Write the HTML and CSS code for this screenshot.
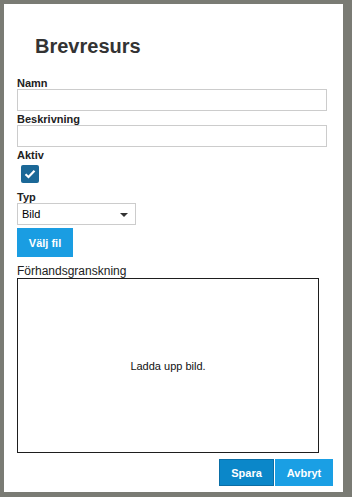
FILE: index.html
```html
<!DOCTYPE html>
<html lang="sv">
<head>
    <meta charset="UTF-8">
    <meta name="viewport" content="width=device-width, initial-scale=1.0">
    <title>Brevresurs</title>
    <link rel="stylesheet" href="styles.css">
</head>
<body>
    <div class="dialog">
        <h2 class="dialog-title">Brevresurs</h2>

        <label class="field-label" for="namn">Namn</label>
        <input type="text" id="namn" class="text-input">

        <label class="field-label" for="beskrivning">Beskrivning</label>
        <input type="text" id="beskrivning" class="text-input">

        <span class="field-label">Aktiv</span>
        <div class="checkbox">
            <svg width="12" height="10" viewBox="0 0 12 10">
                <path d="M1.5 5.2 L4.5 8 L10.5 1.8" fill="none" stroke="#fff" stroke-width="2.2"/>
            </svg>
        </div>

        <label class="field-label" for="typ">Typ</label>
        <div class="select-wrap">
            <select id="typ" class="select">
                <option>Bild</option>
            </select>
            <svg class="select-arrow" width="8" height="4" viewBox="0 0 8 4">
                <path d="M0 0 L8 0 L4 4 Z" fill="#333"/>
            </svg>
        </div>

        <button class="btn btn-file">Välj fil</button>

        <span class="field-label preview-label">Förhandsgranskning</span>
        <div class="preview">Ladda upp bild.</div>

        <div class="dialog-footer">
            <button class="btn btn-save">Spara</button>
            <button class="btn btn-cancel">Avbryt</button>
        </div>
    </div>
</body>
</html>
```

FILE: styles.css
```css
body {
    margin: 0;
    background-color: #7a7b74;
    font-family: "Liberation Sans", Arial, sans-serif;
    font-size: 11px;
    color: #222;
}
.dialog {
    display: flex;
    flex-direction: column;
    box-sizing: border-box;
    width: 339px;
    height: 488px;
    margin: 4px;
    padding: 31px 16px 0 13px;
    background-color: #fff;
}
.dialog-title {
    margin: 0 0 20px 18px;
    font-size: 20px;
    line-height: 22px;
    font-weight: bold;
    color: #333;
}
.field-label {
    display: block;
    font-weight: bold;
    line-height: 12px;
    color: #222;
}
.text-input {
    box-sizing: border-box;
    width: 310px;
    height: 22px;
    margin: 0 0 2px 0;
    border: 1px solid #ccc;
    padding: 0 4px;
    font-family: inherit;
    font-size: 11px;
}
.checkbox {
    display: flex;
    align-items: center;
    justify-content: center;
    width: 18px;
    height: 18px;
    margin: 4px 0 8px 4px;
    border-radius: 2px;
    background-color: #1b6897;
}
.select-wrap {
    position: relative;
    width: 119px;
}
.select {
    box-sizing: border-box;
    width: 119px;
    height: 22px;
    border: 1px solid #ccc;
    border-radius: 0;
    padding: 0 0 0 4px;
    background-color: #fff;
    font-family: inherit;
    font-size: 11px;
    color: #000;
    appearance: none;
    -webkit-appearance: none;
}
.select-arrow {
    position: absolute;
    right: 8px;
    top: 10px;
}
.btn {
    box-sizing: border-box;
    border: 1px solid transparent;
    font-family: inherit;
    font-size: 11px;
    font-weight: bold;
    color: #fff;
    cursor: pointer;
}
.btn-file {
    align-self: flex-start;
    width: 56px;
    height: 29px;
    margin-top: 3px;
    padding: 0;
    background-color: #1a9de2;
    border-color: #1a9de2;
}
.preview-label {
    margin-top: 8px;
    font-size: 12px;
    font-weight: normal;
}
.preview {
    display: flex;
    align-items: center;
    justify-content: center;
    box-sizing: border-box;
    width: 302px;
    height: 175px;
    margin-top: 1px;
    border: 1px solid #1e1e1e;
    color: #111;
}
.dialog-footer {
    display: flex;
    justify-content: flex-end;
    margin: 6px -6px 0 0;
}
.btn-save {
    width: 55px;
    height: 27px;
    padding: 0;
    background-color: #0b87c9;
    border-color: #0a6ea6;
}
.btn-cancel {
    width: 58px;
    height: 27px;
    margin-left: 1px;
    padding: 0;
    background-color: #1a9fe4;
    border-color: #1a9fe4;
}
```
